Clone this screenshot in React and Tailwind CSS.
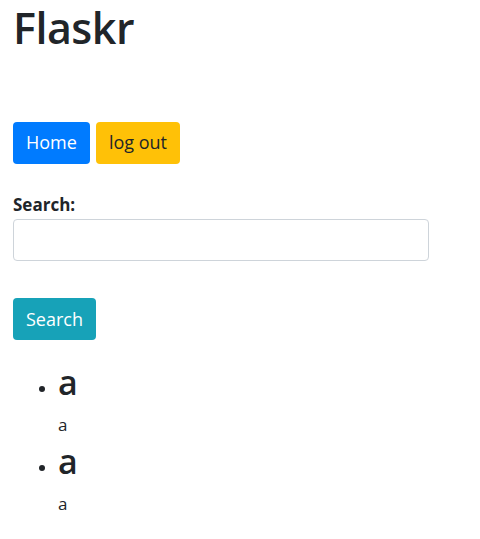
import React from 'react';

const posts = [
  { id: 1, title: 'a', body: 'a' },
  { id: 2, title: 'a', body: 'a' },
];

export default function App() {
  return (
    <div className="min-h-screen bg-white px-[13px] text-[18px] leading-[1.5] text-[#212529] font-['Open_Sans',sans-serif]">
      {/* Header */}
      <h1 className="mb-[9px] pt-[2px] text-[43px] font-semibold leading-[1.2] tracking-[-0.5px]">Flaskr</h1>

      {/* Nav */}
      <div className="mt-[68px] flex gap-[6px]">
        <a className="flex h-[42px] items-center rounded-[4px] bg-[#007bff] px-[13px] text-white">Home</a>
        <a className="flex h-[42px] items-center rounded-[4px] bg-[#ffc107] px-[13px] text-[#212529]">log out</a>
      </div>

      {/* Search form */}
      <form className="mt-[28px]" onSubmit={(e) => e.preventDefault()}>
        <label className="block text-[17px] font-bold leading-[1.5]">Search:</label>
        <input
          type="text"
          className="mt-[2px] block h-[42px] w-[416px] rounded-[4px] border border-[#ced4da] px-[12px] outline-none"
        />
        <button
          type="submit"
          className="mt-[37px] flex h-[42px] items-center rounded-[4px] bg-[#17a2b8] px-[13px] text-white"
        >
          Search
        </button>
      </form>

      {/* Posts */}
      <ul className="mt-[22px] list-disc pl-[45px]">
        {posts.map((post) => (
          <li key={post.id} className="mb-[4px]">
            <h2 className="mb-[9px] text-[34px] font-semibold leading-[1.2]">{post.title}</h2>
            <p className="text-[17px]">{post.body}</p>
          </li>
        ))}
      </ul>
    </div>
  );
}
